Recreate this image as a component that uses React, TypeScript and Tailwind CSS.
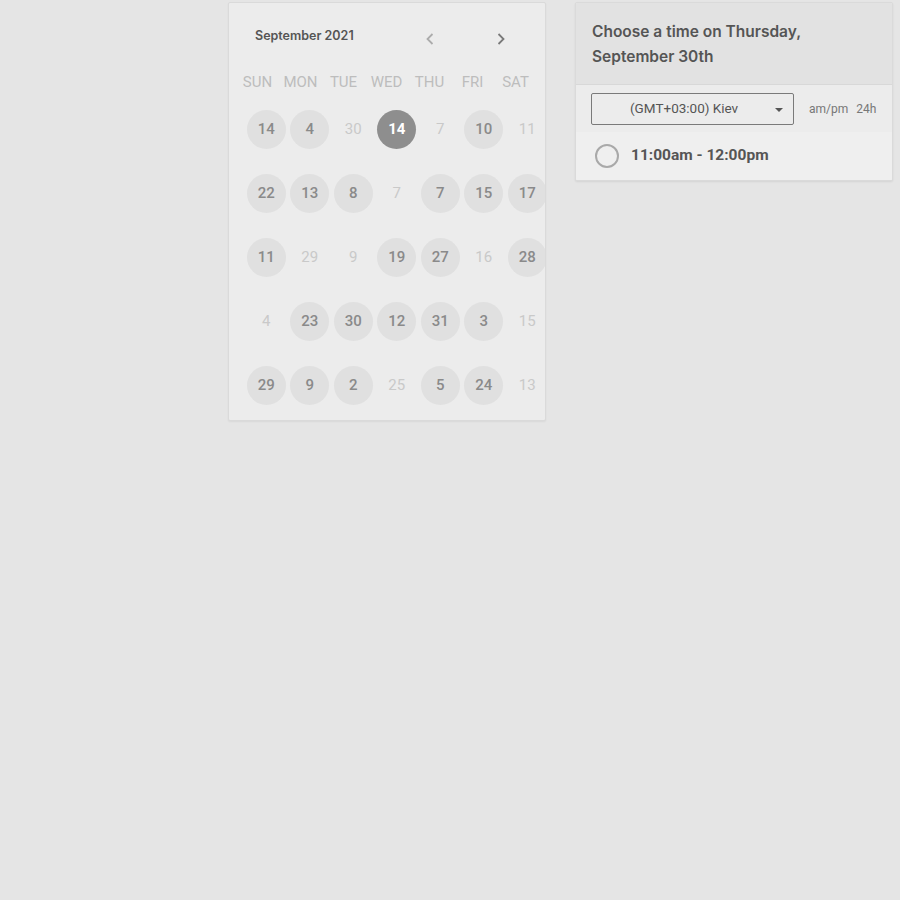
import React from 'react';

type Day = { n: number; kind: 'circle' | 'faint' | 'selected' };

const weekdays = ['SUN', 'MON', 'TUE', 'WED', 'THU', 'FRI', 'SAT'];

const c = (n: number): Day => ({ n, kind: 'circle' });
const f = (n: number): Day => ({ n, kind: 'faint' });
const s = (n: number): Day => ({ n, kind: 'selected' });

const weeks: Day[][] = [
  [c(14), c(4), f(30), s(14), f(7), c(10), f(11)],
  [c(22), c(13), c(8), f(7), c(7), c(15), c(17)],
  [c(11), f(29), f(9), c(19), c(27), f(16), c(28)],
  [f(4), c(23), c(30), c(12), c(31), c(3), f(15)],
  [c(29), c(9), c(2), f(25), c(5), c(24), f(13)],
];

function DayCell({ day }: { day: Day }) {
  if (day.kind === 'faint') {
    return (
      <div className="flex h-[64px] items-center justify-center">
        <span className="text-[15px] text-[#c9c9c9]">{day.n}</span>
      </div>
    );
  }
  const circle =
    day.kind === 'selected'
      ? 'bg-[#8e8e8e] text-white font-bold'
      : 'bg-[#e0e0e0] text-[#8a8a8a] font-medium';
  return (
    <div className="flex h-[64px] items-center justify-center">
      <div className={`flex h-[39px] w-[39px] items-center justify-center rounded-full text-[15px] ${circle}`}>
        {day.n}
      </div>
    </div>
  );
}

export default function App() {
  return (
    <div className="min-h-[900px] w-full bg-[#e5e5e5] font-['Roboto',sans-serif]">
      <div className="flex items-start gap-[29px] pl-[228px] pt-[2px]">
        {/* calendar */}
        <div className="h-[419px] w-[318px] overflow-hidden rounded-[2px] border border-[#dadada] bg-[#ececec] pt-[22px] shadow-[0_1px_2px_rgba(0,0,0,0.06)]">
          <div className="flex items-center pl-[26px]">
            <span className="font-['Inter',sans-serif] text-[12.5px] font-semibold leading-[18px] text-[#555]">
              September 2021
            </span>
            <div className="ml-[70px] mt-[7px] flex items-center gap-[59px]">
              <svg width="12" height="14" viewBox="0 0 12 14" fill="none">
                <path d="M8.5 2 L3.5 7 L8.5 12" stroke="#acacac" strokeWidth="1.8" />
              </svg>
              <svg width="12" height="14" viewBox="0 0 12 14" fill="none">
                <path d="M3.5 2 L8.5 7 L3.5 12" stroke="#7a7a7a" strokeWidth="1.8" />
              </svg>
            </div>
          </div>

          <div className="mt-[26px] ml-[7px] grid grid-cols-[repeat(7,43px)]">
            {weekdays.map((w) => (
              <div key={w} className="text-center text-[15px] leading-[20px] text-[#bdbdbd]">
                {w}
              </div>
            ))}
          </div>

          <div className="mt-[5px] ml-[15.5px] grid grid-cols-[repeat(7,43.5px)]">
            {weeks.map((week, i) =>
              week.map((day, j) => <DayCell key={`${i}-${j}`} day={day} />)
            )}
          </div>
        </div>

        {/* time picker */}
        <div className="w-[318px] overflow-hidden rounded-[2px] border border-[#dadada] bg-[#ececec] shadow-[0_1px_2px_rgba(0,0,0,0.08)]">
          <div className="h-[82px] border-b border-[#d8d8d8] bg-[#e2e2e2] px-[16px] pt-[16px]">
            <p className="font-['Inter',sans-serif] text-[15.5px] font-semibold leading-[25px] text-[#555]">
              Choose a time on Thursday,
              <br />
              September 30th
            </p>
          </div>
          <div className="flex h-[47px] items-center bg-[#ececec] pl-[15px]">
            <div className="relative flex h-[32px] w-[203px] items-center rounded-[2px] border border-[#7a7a7a] pl-[38px] text-[13.5px] text-[#555]">
              (GMT+03:00) Kiev
              <span className="absolute right-[10px] top-[14px] h-0 w-0 border-x-[4px] border-t-[4px] border-x-transparent border-t-[#555]" />
            </div>
            <span className="ml-[15px] text-[12px] text-[#777]">am/pm</span>
            <span className="ml-[8px] text-[12px] text-[#777]">24h</span>
          </div>
          <div className="flex h-[48px] items-center bg-[#efefef] pl-[19px]">
            <span className="h-[24px] w-[24px] rounded-full border-2 border-[#a9a9a9]" />
            <span className="ml-[12px] text-[15.5px] font-bold text-[#555]">11:00am - 12:00pm</span>
          </div>
        </div>
      </div>
    </div>
  );
}
